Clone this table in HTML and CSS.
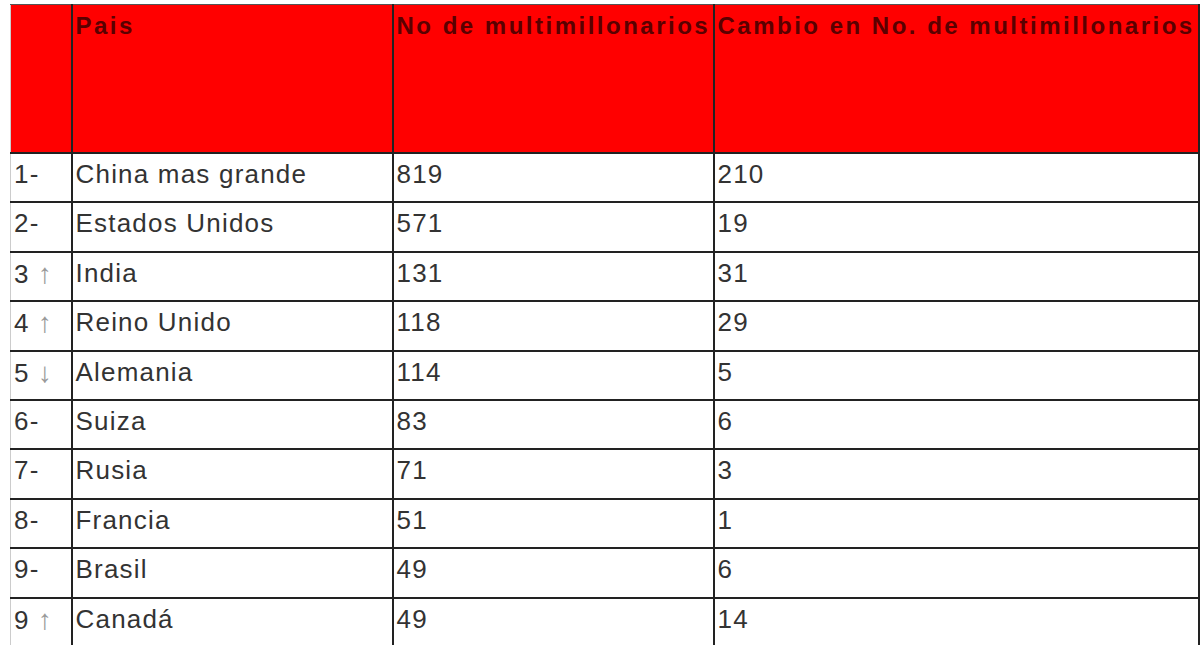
FILE: index.html
```html
<!DOCTYPE html>
<html lang="es">
<head>
<meta charset="utf-8">
<title>Multimillonarios por país</title>
<link rel="stylesheet" href="styles.css">
</head>
<body>
<div class="wrap">
<table class="rank">
  <colgroup>
    <col class="c-rank">
    <col class="c-country">
    <col class="c-num">
    <col class="c-change">
  </colgroup>
  <thead>
    <tr>
      <th class="first"></th>
      <th>Pais</th>
      <th>No de multimillonarios</th>
      <th>Cambio en No. de multimillonarios</th>
    </tr>
  </thead>
  <tbody>
    <tr><td class="first">1-</td><td>China mas grande</td><td>819</td><td>210</td></tr>
    <tr><td class="first">2-</td><td>Estados Unidos</td><td>571</td><td>19</td></tr>
    <tr><td class="first">3 <span class="arr">↑</span></td><td>India</td><td>131</td><td>31</td></tr>
    <tr><td class="first">4 <span class="arr">↑</span></td><td>Reino Unido</td><td>118</td><td>29</td></tr>
    <tr><td class="first">5 <span class="arr">↓</span></td><td>Alemania</td><td>114</td><td>5</td></tr>
    <tr><td class="first">6-</td><td>Suiza</td><td>83</td><td>6</td></tr>
    <tr><td class="first">7-</td><td>Rusia</td><td>71</td><td>3</td></tr>
    <tr><td class="first">8-</td><td>Francia</td><td>51</td><td>1</td></tr>
    <tr><td class="first">9-</td><td>Brasil</td><td>49</td><td>6</td></tr>
    <tr><td class="first">9 <span class="arr">↑</span></td><td>Canadá</td><td>49</td><td>14</td></tr>
  </tbody>
</table>
</div>
</body>
</html>
```

FILE: styles.css
```css
html, body {
  margin: 0;
  padding: 0;
  background: #ffffff;
}

body {
  font-family: "Liberation Sans", Arial, sans-serif;
  overflow: hidden;
}

.wrap {
  padding: 4px 0 0 10px;
}

.rank {
  border-collapse: collapse;
  table-layout: fixed;
  width: 1188px;
}

.c-rank { width: 61px; }
.c-country { width: 321px; }
.c-num { width: 321px; }
.c-change { width: 485px; }

.rank th,
.rank td {
  border: 2px solid #222222;
  text-align: left;
  vertical-align: top;
  white-space: nowrap;
  overflow: hidden;
}

.rank th {
  background: #ff0000;
  color: #5a0000;
  font-size: 24px;
  font-weight: bold;
  letter-spacing: 2.5px;
  height: 140px;
  padding: 7px 3px 0 3px;
  border-top: 1px solid #555555;
}

.rank td {
  color: #333333;
  font-size: 26px;
  letter-spacing: 1.2px;
  height: 42.4px;
  padding: 5px 3px 0 3px;
}

.rank .first {
  border-left: 1px solid #cccccc;
}

.arr {
  color: #999999;
  font-size: 28px;
  letter-spacing: 0;
}
```
